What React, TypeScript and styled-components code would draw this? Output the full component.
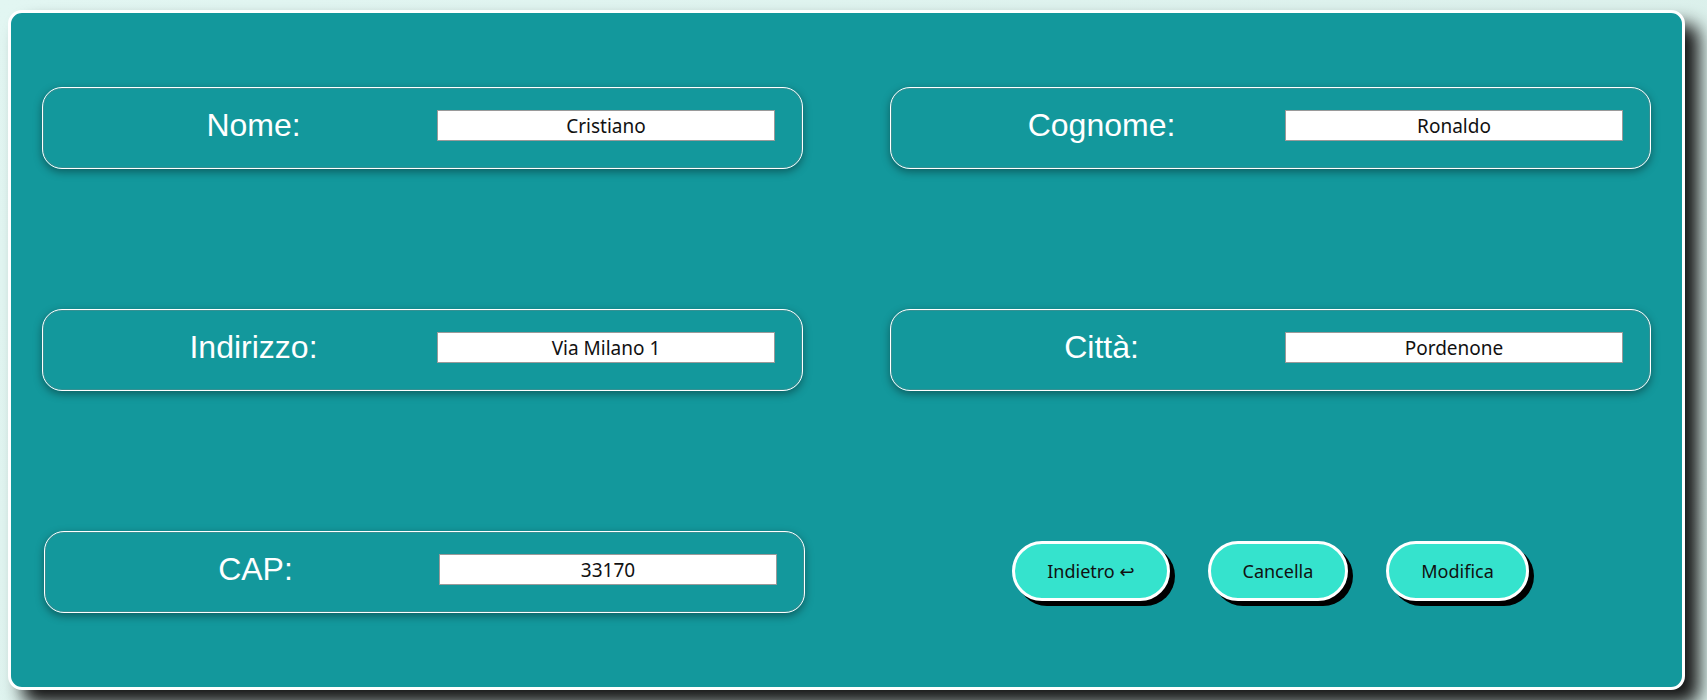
import styled, { createGlobalStyle } from 'styled-components';

/*
 *  global
 */
const GlobalStyle = createGlobalStyle`
  html, body {
    margin: 0;
    padding: 0;
  }

  body {
    background: linear-gradient(135deg, #e2f6f2 0%, #d9eee9 100%);
    min-height: 100vh;
    padding: 10px 0 0 8px;
    box-sizing: border-box;
  }
`;

/*
 *  layout
 */
const Card = styled.form`
  width: 1677px;
  box-sizing: border-box;
  background: #13989c;
  border: 3px solid #ffffff;
  border-radius: 14px;
  box-shadow: 14px 14px 18px #151515;
  padding: 74px 31px;
  display: grid;
  grid-template-columns: 1fr 1fr;
  column-gap: 87px;
  row-gap: 140px;
`;

/*
 *  fields
 */
const FieldBox = styled.div<{ $shift?: number }>`
  height: 82px;
  box-sizing: border-box;
  border: 1px solid #ffffff;
  border-radius: 20px;
  box-shadow: 0 3px 8px rgba(0, 0, 0, 0.38), inset 0 0 0 1px rgba(120, 130, 130, 0.35);
  padding: 0 27px 5px;
  margin-left: ${(p) => p.$shift ?? 0}px;
  margin-right: ${(p) => -(p.$shift ?? 0)}px;
  display: flex;
  align-items: center;
`;

const Label = styled.label`
  flex: 1;
  text-align: center;
  color: #ffffff;
  font-family: 'Liberation Sans', Arial, sans-serif;
  font-size: 32px;
`;

const Input = styled.input`
  width: 338px;
  height: 31px;
  box-sizing: border-box;
  padding: 0;
  border: 1px solid #9a9a9a;
  background: #ffffff;
  color: #111111;
  text-align: center;
  font-family: 'Noto Sans', 'DejaVu Sans', sans-serif;
  font-size: 19px;
  outline: none;
`;

type FieldProps = {
  label: string;
  value: string;
  shift?: number;
};

const Field = ({ label, value, shift }: FieldProps): JSX.Element => (
  <FieldBox $shift={shift}>
    <Label>{label}</Label>
    <Input defaultValue={value} />
  </FieldBox>
);

/*
 *  buttons
 */
const Actions = styled.div`
  display: flex;
  align-items: center;
  justify-content: center;
  gap: 38px;
  padding-bottom: 3px;
`;

const Button = styled.button`
  height: 60px;
  box-sizing: border-box;
  padding: 0 32px;
  border: 3px solid #ffffff;
  border-radius: 30px;
  background: #35e3cd;
  color: #111111;
  box-shadow: 5px 5px 0 #000000;
  font-family: 'Noto Sans', 'DejaVu Sans', sans-serif;
  font-size: 18px;
  white-space: nowrap;
  cursor: pointer;
`;

export default function App(): JSX.Element {
  return (
    <>
      <GlobalStyle />
      <Card onSubmit={(e) => e.preventDefault()}>
        <Field label="Nome:" value="Cristiano" />
        <Field label="Cognome:" value="Ronaldo" />
        <Field label="Indirizzo:" value="Via Milano 1" />
        <Field label="Città:" value="Pordenone" />
        <Field label="CAP:" value="33170" shift={2} />
        <Actions>
          <Button type="button">Indietro ↩</Button>
          <Button type="button">Cancella</Button>
          <Button type="submit">Modifica</Button>
        </Actions>
      </Card>
    </>
  );
}
